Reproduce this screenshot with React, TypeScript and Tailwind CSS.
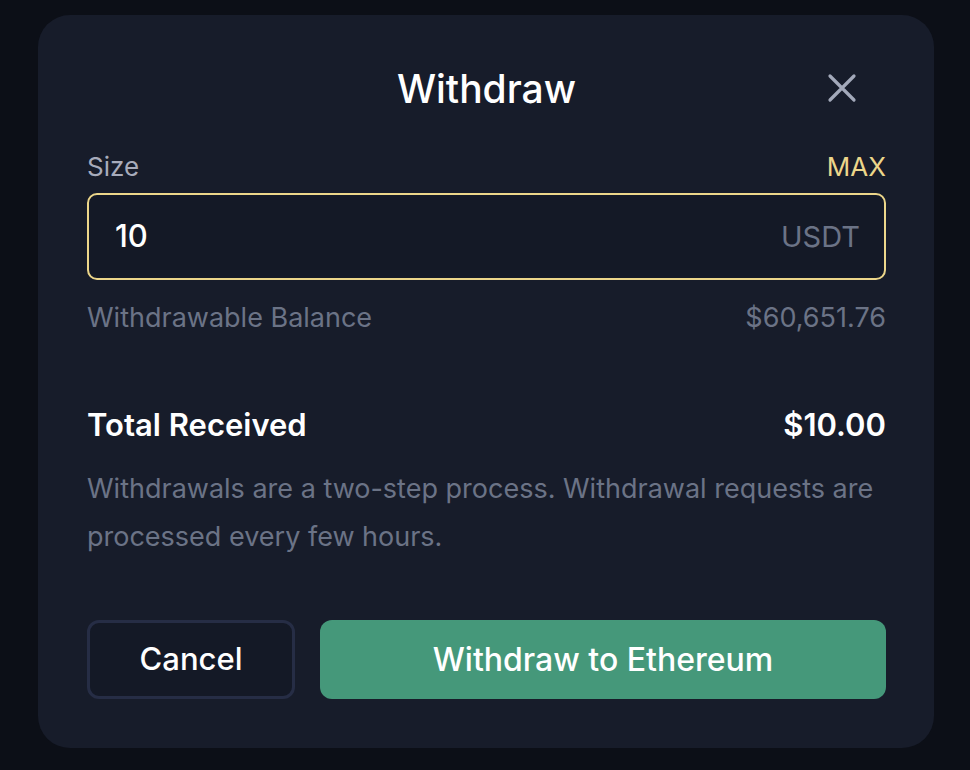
import React from "react";

export default function App() {
  return (
    <div
      className="w-[970px] h-[770px] bg-[#0c0f17] flex items-start justify-start pl-[38px] overflow-hidden"
      style={{ fontFamily: "Inter, 'Noto Sans', sans-serif" }}
    >
      <div className="mt-[15px] w-[896px] h-[733px] rounded-[32px] bg-[#171c2a] pl-[49px] pr-[48px] pt-[41px]">
        <div className="relative flex items-center justify-center h-[64px]">
          <h1 className="text-[39px] font-medium text-white leading-none">Withdraw</h1>
          <button className="absolute right-[29px] top-[17px] w-[30px] h-[30px] text-[#a3a9ba]">
            <svg viewBox="0 0 30 30" className="w-[30px] h-[30px]" fill="none" stroke="currentColor" strokeWidth="3.2" strokeLinecap="round">
              <path d="M3 3 L27 27 M27 3 L3 27" />
            </svg>
          </button>
        </div>
        <div className="mt-[34px] flex items-center justify-between text-[26px] leading-none">
          <span className="text-[#a7abbb]">Size</span>
          <span className="text-[#ecd68a]">MAX</span>
        </div>
        <div className="mt-[13px] h-[87px] rounded-[10px] border-2 border-[#ecd68a] bg-[#141926] flex items-center justify-between pl-[26px] pr-[24px]">
          <span className="text-[31px] font-medium text-white">10</span>
          <span className="text-[29px] text-[#6b7386]">USDT</span>
        </div>
        <div className="mt-[24px] flex items-center justify-between text-[27px] text-[#6b7386] leading-none">
          <span>Withdrawable Balance</span>
          <span>$60,651.76</span>
        </div>
        <div className="mt-[78px] flex items-center justify-between text-[31px] font-semibold text-white leading-none">
          <span>Total Received</span>
          <span>$10.00</span>
        </div>
        <p className="mt-[25px] text-[27px] leading-[48px] text-[#6b7386]">
          Withdrawals are a two-step process. Withdrawal requests are processed every few hours.
        </p>
        <div className="mt-[59px] flex gap-[25px]">
          <button className="w-[208px] h-[79px] rounded-[12px] border-[3px] border-[#262d45] bg-[#141926] text-white text-[31px] font-medium">
            Cancel
          </button>
          <button className="flex-1 h-[79px] rounded-[12px] bg-[#45987a] text-white text-[32px] font-medium">
            Withdraw to Ethereum
          </button>
        </div>
      </div>
    </div>
  );
}
